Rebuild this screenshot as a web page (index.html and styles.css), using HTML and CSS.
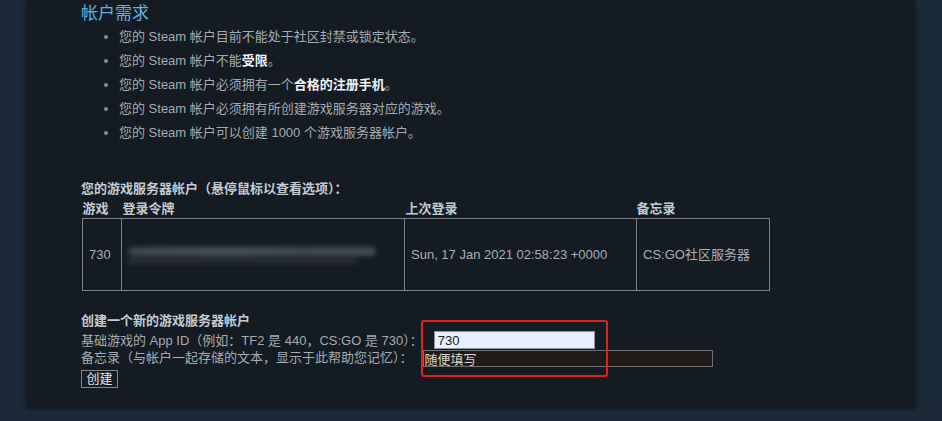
FILE: index.html
```html
<!DOCTYPE html>
<html lang="zh-CN">
<head>
<meta charset="utf-8">
<title>Steam 游戏服务器帐户管理</title>
<link rel="stylesheet" href="styles.css">
</head>
<body>
<div class="page">
  <div class="panel">
    <h2 class="req-title">帐户需求</h2>
    <ul class="req-list">
      <li>您的 Steam 帐户目前不能处于社区封禁或锁定状态。</li>
      <li>您的 Steam 帐户不能<b>受限</b>。</li>
      <li>您的 Steam 帐户必须拥有一个<b>合格的注册手机</b>。</li>
      <li>您的 Steam 帐户必须拥有所创建游戏服务器对应的游戏。</li>
      <li>您的 Steam 帐户可以创建 1000 个游戏服务器帐户。</li>
    </ul>

    <div class="section-title list-title">您的游戏服务器帐户（悬停鼠标以查看选项）：</div>
    <table class="accounts">
      <thead>
        <tr>
          <th class="c-game">游戏</th>
          <th class="c-token">登录令牌</th>
          <th class="c-last">上次登录</th>
          <th class="c-memo">备忘录</th>
        </tr>
      </thead>
      <tbody>
        <tr>
          <td>730</td>
          <td><div class="token-blur"><span class="blur-a"></span><span class="blur-b"></span></div></td>
          <td>Sun, 17 Jan 2021 02:58:23 +0000</td>
          <td>CS:GO社区服务器</td>
        </tr>
      </tbody>
    </table>

    <form class="create">
      <div class="section-title">创建一个新的游戏服务器帐户</div>
      <div class="field-row first-row">
        <label class="lbl-appid">基础游戏的 App ID（例如：TF2 是 440，CS:GO 是 730）：</label>
        <input class="in-appid" type="text" value="730">
      </div>
      <div class="field-row">
        <label class="lbl-memo">备忘录（与帐户一起存储的文本，显示于此帮助您记忆）：</label>
        <input class="in-memo" type="text" value="随便填写">
      </div>
      <button class="btn-create" type="button">创建</button>
      <div class="annot"></div>
    </form>
  </div>
</div>
</body>
</html>
```

FILE: styles.css
```css
* { box-sizing: border-box; }

html, body {
  margin: 0;
  padding: 0;
}

body {
  background: #1c2939;
  font-family: "Liberation Sans", "Noto Sans CJK SC", sans-serif;
  font-size: 13px;
  color: #a9aeb4;
  width: 942px;
  height: 421px;
  overflow: hidden;
}

.page {
  padding-left: 26px;
}

.panel {
  width: 889px;
  height: 409px;
  background: #141b23;
  padding: 4px 0 0 55px;
  box-shadow: 0 0 6px rgba(0, 0, 0, 0.35);
}

.req-title {
  margin: 0;
  font-size: 17px;
  font-weight: normal;
  line-height: 20px;
  color: #5fb4e6;
}

.req-list {
  margin: 0;
  padding: 0 0 0 38px;
  list-style: disc;
}

.req-list li {
  height: 24px;
  line-height: 24px;
  color: #a6abb0;
}

.req-list li::marker {
  color: #8b9096;
  font-size: 14px;
}

.req-list b {
  color: #f2f4f6;
  font-weight: bold;
}

.section-title {
  font-weight: bold;
  color: #c3cbd2;
  font-size: 13px;
  line-height: 18px;
}

.list-title {
  margin-top: 36px;
}

.accounts {
  border-collapse: collapse;
  margin-left: 1px;
  margin-top: 1px;
}

.accounts th {
  text-align: left;
  font-weight: bold;
  color: #c3cbd2;
  font-size: 13px;
  line-height: 19px;
  padding: 0;
}

.accounts .c-game { width: 39px; padding-left: 0; }
.accounts .c-token { width: 283px; padding-left: 1px; }
.accounts .c-last { width: 232px; padding-left: 1px; }
.accounts .c-memo { width: 133px; padding-left: 0; }

.accounts td {
  border: 1px solid #7c838b;
  height: 72px;
  padding: 0 6px;
  color: #a9aeb4;
  line-height: 18px;
  white-space: nowrap;
}

.token-blur {
  width: 248px;
  height: 18px;
  margin-top: 2px;
  filter: blur(2.5px);
}

.blur-a {
  display: block;
  height: 9px;
  border-radius: 5px;
  background: linear-gradient(90deg, #40464e 0%, #4b515a 40%, #42484f 70%, #454b52 100%);
}

.blur-b {
  display: block;
  margin-top: 2px;
  height: 6px;
  width: 92%;
  background: #282e36;
}

.create {
  position: relative;
  margin-top: 21px;
}

.field-row {
  display: flex;
  align-items: center;
  height: 17px;
  color: #a6abb0;
  line-height: 17px;
}

.first-row {
  margin-top: 2px;
}

.lbl-appid { margin-right: 11px; }
.lbl-memo { margin-right: 10px; }

.in-appid {
  width: 161px;
  height: 18px;
  margin-top: -1px;
  border: 1px solid #8e949a;
  background: #e8f0fe;
  color: #1b1b1b;
  font: 13px "Liberation Sans", "Noto Sans CJK SC", sans-serif;
  padding: 0 3px;
  position: relative;
  z-index: 1;
}

.in-memo {
  width: 290px;
  height: 17px;
  margin-top: 1px;
  border: 1px solid #6e7276;
  background: #1f1b18;
  color: #dcd6cc;
  font: 13px "Liberation Sans", "Noto Sans CJK SC", sans-serif;
  padding: 0 1px;
}

.btn-create {
  margin-top: 4px;
  width: 37px;
  height: 18px;
  padding: 0;
  border: 1px solid #80868c;
  background: #171d25;
  color: #e3e6e9;
  font: 13px "Liberation Sans", "Noto Sans CJK SC", sans-serif;
  line-height: 16px;
}

.annot {
  position: absolute;
  left: 340px;
  top: 8px;
  width: 187px;
  height: 57px;
  border: 2px solid #e3201d;
  border-radius: 3px;
  pointer-events: none;
}
```
